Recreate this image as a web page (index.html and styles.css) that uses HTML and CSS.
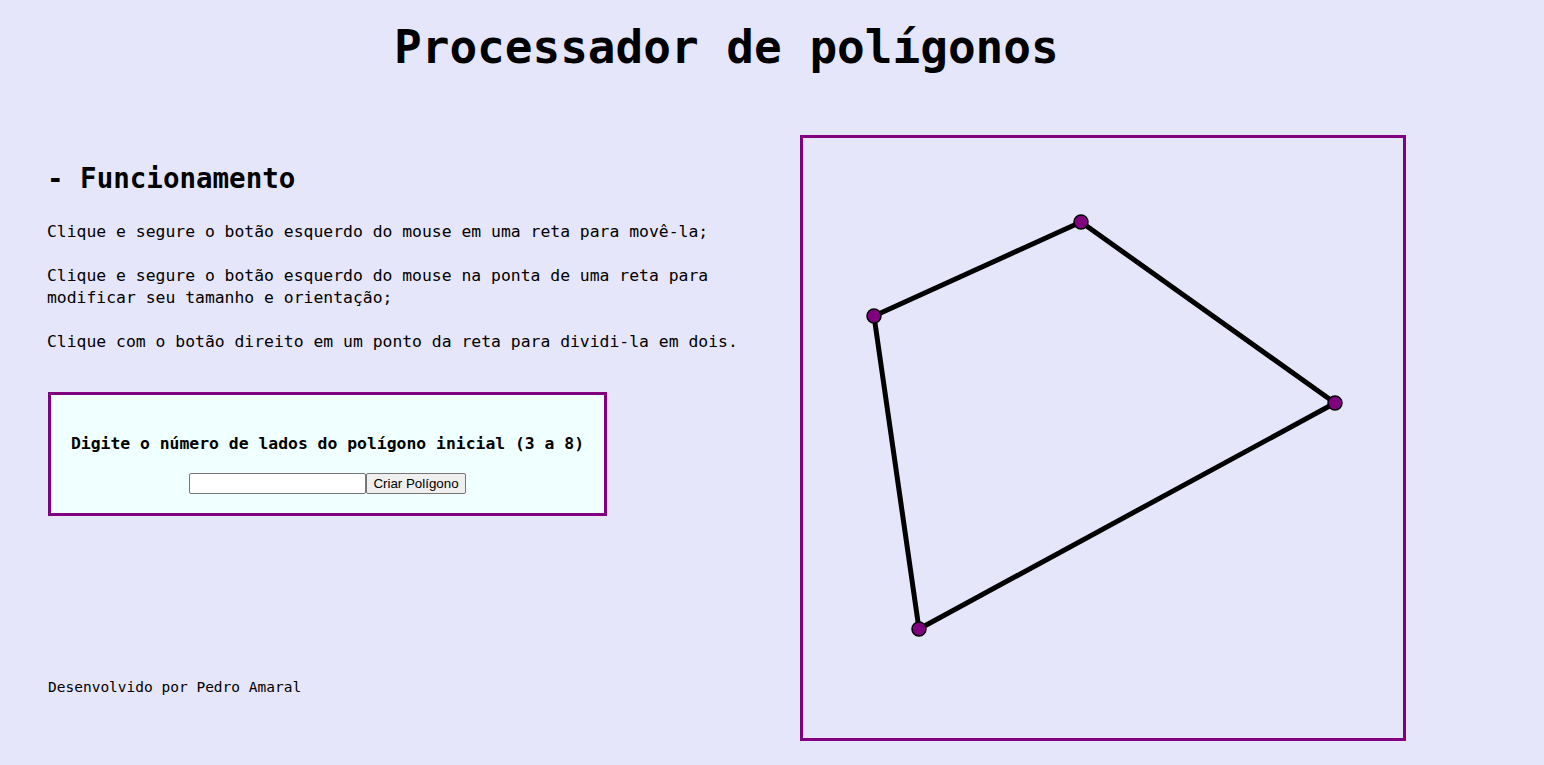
FILE: index.html
```html
<!DOCTYPE html>
<html lang="pt">
<head>
<meta charset="utf-8">
<title>Processador de polígonos</title>
<link rel="stylesheet" href="styles.css">
</head>
<body>
<header class="header">
  <h1 class="title">Processador de polígonos</h1>
</header>
<main class="main">
  <section class="info">
    <h2 class="info-title">- Funcionamento</h2>
    <p class="info-text">Clique e segure o botão esquerdo do mouse em uma reta para movê-la;</p>
    <p class="info-text">Clique e segure o botão esquerdo do mouse na ponta de uma reta para<br>modificar seu tamanho e orientação;</p>
    <p class="info-text">Clique com o botão direito em um ponto da reta para dividi-la em dois.</p>
    <div class="panel">
      <p class="panel-label">Digite o número de lados do polígono inicial (3 a 8)</p>
      <div class="panel-row">
        <input class="panel-input" type="text"><button class="panel-button" type="button">Criar Polígono</button>
      </div>
    </div>
    <footer class="credit">Desenvolvido por Pedro Amaral</footer>
  </section>
  <div class="canvas-box">
    <svg class="canvas" width="600" height="600" viewBox="0 0 600 600">
      <polygon points="71,178 278,84 532,265 116,491" fill="none" stroke="#000" stroke-width="5" stroke-linejoin="round"/>
      <circle cx="71" cy="178" r="7" fill="#800080" stroke="#000" stroke-width="1.5"/>
      <circle cx="278" cy="84" r="7" fill="#800080" stroke="#000" stroke-width="1.5"/>
      <circle cx="532" cy="265" r="7" fill="#800080" stroke="#000" stroke-width="1.5"/>
      <circle cx="116" cy="491" r="7" fill="#800080" stroke="#000" stroke-width="1.5"/>
    </svg>
  </div>
</main>
</body>
</html>
```

FILE: styles.css
```css
html, body {
  margin: 0;
  padding: 0;
}
body {
  background: #e6e6fa;
  color: #000;
  font-family: "DejaVu Sans Mono", "Liberation Mono", monospace;
  width: 1544px;
  height: 765px;
  overflow: hidden;
}
.header {
  padding-top: 19px;
  padding-left: 394px;
  height: 115px;
  box-sizing: border-box;
}
.title {
  margin: 0;
  font-size: 46px;
  line-height: 56px;
  font-weight: bold;
}
.main {
  display: flex;
  align-items: flex-start;
}
.info {
  width: 800px;
  box-sizing: border-box;
  padding-left: 48px;
  display: flex;
  flex-direction: column;
  align-items: flex-start;
}
.info-title {
  margin: 46px 0 0 -1px;
  font-size: 27.5px;
  line-height: 34px;
  font-weight: bold;
}
.info-text {
  margin: 0 0 22px -1px;
  font-size: 16.4px;
  line-height: 22px;
}
.info-title + .info-text {
  margin-top: 26px;
}
.panel {
  margin-top: 17px;
  width: 559px;
  height: 124px;
  box-sizing: border-box;
  border: 3px solid #800080;
  background: #f0ffff;
  padding-top: 38px;
  display: flex;
  flex-direction: column;
  align-items: center;
}
.panel-label {
  margin: 0;
  font-size: 16.4px;
  line-height: 22px;
  font-weight: bold;
}
.panel-row {
  margin-top: 18px;
  display: flex;
}
.panel-input {
  width: 177px;
  height: 21px;
  box-sizing: border-box;
  margin: 0;
  border: 1px solid #767676;
  border-radius: 2px;
  background: #fff;
  font-family: "Liberation Sans", Arial, sans-serif;
  font-size: 13.33px;
}
.panel-button {
  height: 21px;
  box-sizing: border-box;
  margin: 0;
  padding: 1px 6px;
  border: 1px solid #767676;
  border-radius: 2px;
  background: #efefef;
  font-family: "Liberation Sans", Arial, sans-serif;
  font-size: 13.33px;
  color: #000;
}
.credit {
  margin-top: 162px;
  font-size: 14.5px;
  line-height: 18px;
}
.canvas-box {
  margin-top: 20px;
  border: 3px solid #800080;
  width: 600px;
  height: 600px;
}
.canvas {
  display: block;
}
```
